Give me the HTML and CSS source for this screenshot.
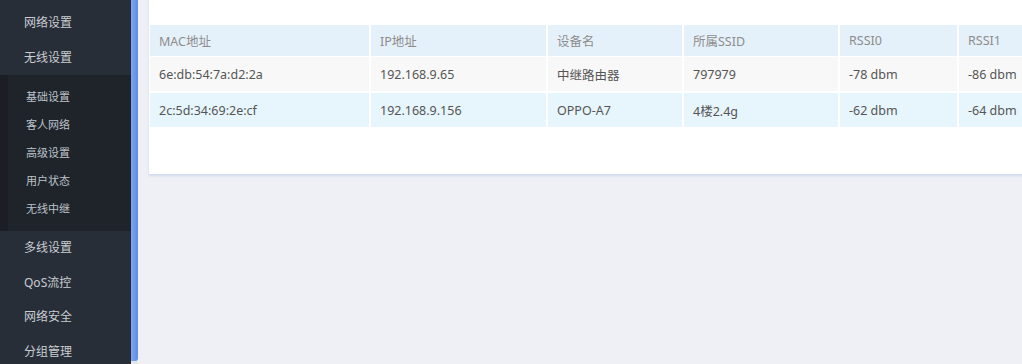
FILE: index.html
```html
<!DOCTYPE html>
<html lang="zh-CN">

<head>
    <meta charset="UTF-8">
    <meta name="viewport" content="width=device-width, initial-scale=1.0">
    <title>无线设置 - 用户状态</title>
    <link rel="stylesheet" href="styles.css">
</head>

<body>
    <div class="layout">
        <nav class="sidebar">
            <div class="menu-item">网络设置</div>
            <div class="menu-item">无线设置</div>
            <div class="submenu">
                <div class="sub-item">基础设置</div>
                <div class="sub-item">客人网络</div>
                <div class="sub-item">高级设置</div>
                <div class="sub-item">用户状态</div>
                <div class="sub-item">无线中继</div>
            </div>
            <div class="menu-item">多线设置</div>
            <div class="menu-item">QoS流控</div>
            <div class="menu-item">网络安全</div>
            <div class="menu-item">分组管理</div>
        </nav>
        <div class="scroll-track">
            <div class="scroll-thumb"></div>
        </div>
        <main class="content">
            <div class="card">
                <table class="client-table">
                    <thead>
                        <tr>
                            <th class="col-mac">MAC地址</th>
                            <th class="col-ip">IP地址</th>
                            <th class="col-name">设备名</th>
                            <th class="col-ssid">所属SSID</th>
                            <th class="col-rssi0">RSSI0</th>
                            <th class="col-rssi1">RSSI1</th>
                        </tr>
                    </thead>
                    <tbody>
                        <tr>
                            <td>6e:db:54:7a:d2:2a</td>
                            <td>192.168.9.65</td>
                            <td>中继路由器</td>
                            <td>797979</td>
                            <td>-78 dbm</td>
                            <td>-86 dbm</td>
                        </tr>
                        <tr>
                            <td>2c:5d:34:69:2e:cf</td>
                            <td>192.168.9.156</td>
                            <td>OPPO-A7</td>
                            <td>4楼2.4g</td>
                            <td>-62 dbm</td>
                            <td>-64 dbm</td>
                        </tr>
                    </tbody>
                </table>
            </div>
        </main>
    </div>
</body>

</html>
```

FILE: styles.css
```css
html,
body {
    margin: 0;
    height: 100%;
}

body {
    font-family: 'Noto Sans', 'Noto Sans CJK SC', sans-serif;
    background: #eef0f5;
    overflow: hidden;
}

.layout {
    display: flex;
    height: 364px;
}

/* 左侧菜单 */
.sidebar {
    width: 131px;
    flex-shrink: 0;
    background: #282e38;
    padding-top: 6px;
    box-sizing: border-box;
}

.menu-item {
    height: 34.5px;
    line-height: 34.5px;
    padding-left: 24px;
    font-size: 12px;
    color: #c9cdd2;
}

.submenu {
    background: #1f242b;
    border-left: 8px solid #1b1f25;
    padding: 8px 0;
}

.sub-item {
    height: 28px;
    line-height: 28px;
    padding-left: 18px;
    font-size: 11px;
    color: #bcc2c9;
}

/* 滚动条 */
.scroll-track {
    width: 7px;
    flex-shrink: 0;
    background: #e3e7ef;
}

.scroll-thumb {
    height: 361px;
    background: linear-gradient(to right, #7ea6ef, #5d8de6);
    border-radius: 0 0 3px 0;
}

/* 内容区 */
.content {
    flex: 1;
    padding-left: 11px;
    overflow: hidden;
}

.card {
    width: 940px;
    background: #ffffff;
    padding: 25px 0 45px 1px;
    border-bottom: 1px solid #d6ddee;
    box-shadow: 0 1px 2px rgba(180, 195, 225, 0.5);
}

.client-table {
    border-collapse: collapse;
    table-layout: fixed;
    width: 920px;
    font-size: 12.5px;
}

.client-table th,
.client-table td {
    text-align: left;
    padding: 0 0 0 9px;
    border-right: 2px solid #ffffff;
    white-space: nowrap;
}

.client-table th {
    height: 31px;
    font-weight: normal;
    color: #8c8c8c;
    background: #e5f1fa;
    border-bottom: 1px solid #ffffff;
}

.client-table td {
    height: 34px;
    color: #555555;
    border-bottom: 2px solid #ffffff;
}

.client-table tbody tr:nth-child(1) td {
    background: #f8f8f8;
}

.client-table tbody tr:nth-child(2) td {
    background: #e7f5fd;
}

.col-mac {
    width: 210px;
}

.col-ip {
    width: 166px;
}

.col-name {
    width: 125px;
}

.col-ssid {
    width: 145px;
}

.col-rssi0 {
    width: 108px;
}

.col-rssi1 {
    width: 111px;
}
```
